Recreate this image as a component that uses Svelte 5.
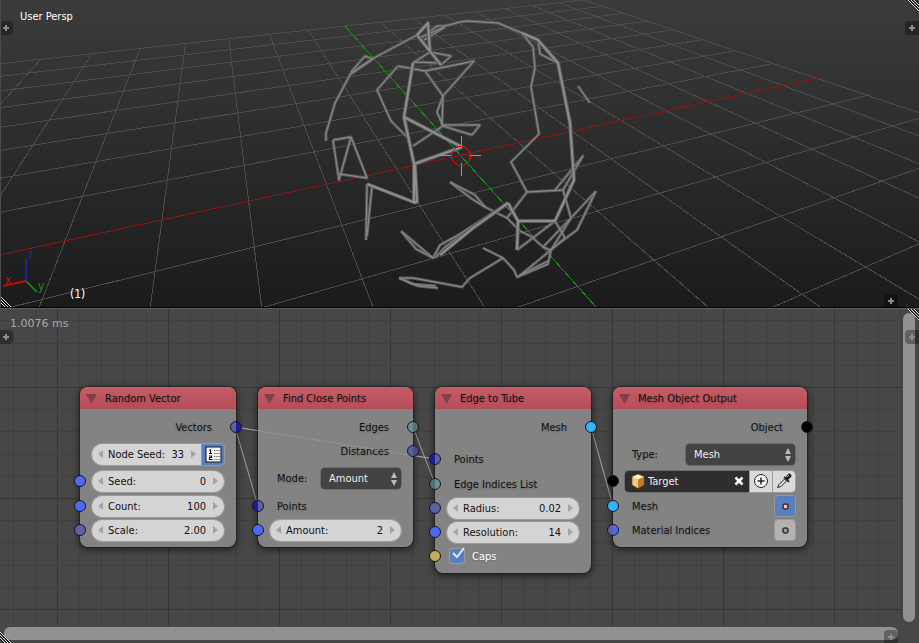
<script>
  // Perspective projection of the ground plane (u along X, v along Y).
  const depth = (u, v) => 1 + 0.04598 * u + 0.1058 * v;
  const project = (u, v) => {
    const w = depth(u, v);
    return [
      ((460.5 + 82.07 * u + 22.05 * v) / w).toFixed(1),
      ((155.3 - 6.03 * u - 13.4 * v) / w).toFixed(1)
    ].join(' ');
  };
  const steps = Array.from({ length: 17 }, (_, i) => i - 8);
  const near = 0.12;
  const floor = [
    ...steps.map((u) => ({
      axis: u === 0 ? 'y' : '',
      d: `M${project(u, Math.max(-8, (near - 1 - 0.04598 * u) / 0.1058))}L${project(u, 8)}`
    })),
    ...steps.map((v) => ({
      axis: v === 0 ? 'x' : '',
      d: `M${project(Math.max(-8, (near - 1 - 0.1058 * v) / 0.04598), v)}L${project(8, v)}`
    }))
  ].sort((a, b) => a.axis.length - b.axis.length);

  const thin = [
    'M326 141L326 133L335 103L351 73L372 59L417 35',
    'M351 72L365 56L373 59L351 74',
    'M428 33L437 26L445 26L460 22L467 21L498 23L522 33',
    'M424 40L445 27M421 37L445 27',
    'M398 66L377 90L391 121L407 137',
    'M398 66L425 71L443 96L437 112L443 126',
    'M425 71L455 65L474 61L443 96L442 125L480 125L472 135L443 126L413 146',
    'M413 63L430 52L451 56L441 65M413 62L441 63',
    'M522 33L533 47L535 68L531 87L539 134L511 162L527 192L563 190',
    'M538 40L540 54L558 63',
    'M578 86L590 103',
    'M333 140L351 137L367 178L339 174M333 140L339 180L351 137',
    'M367 184L366 240M372 186L367 236',
    'M401 231L433 258M401 231L416 249L433 258L440 245L460 234L508 203M435 258L445 247L508 203',
    'M399 278L418 286L438 288M399 278L412 284L436 286M399 278L413 278L462 287L470 278L503 258',
    'M483 248L503 258L514 270L517 277L548 264L551 250',
    'M450 182L475 195L485 207L507 218L520 231L532 237L543 247L550 250',
    'M450 182L472 199L485 207',
    'M507 218L527 192',
    'M563 190L571 218L543 247M555 190L583 156L563 190',
    'M596 191L577 230L550 250M596 191L571 218L551 250',
    'M517 250L555 221L565 238L551 250L518 277M520 275L548 261'
  ];
  const thick = [
    'M417 35L428 23L430 52M417 35L441 65',
    'M413 63L404 117L414 164L414 202L417 202L415 165',
    'M404 117L462 147M414 164L462 147',
    'M367 184L416 203',
    'M522 33L538 40L558 63L570 123L574 180L555 221',
    'M508 203L518 221L555 221M518 222L517 250',
    'M440 255L473 228L508 203'
  ];

  // Editor grid: 111px blocks split in five.
  const gridX = Array.from({ length: 17 * 5 }, (_, i) => ({ p: 57 + Math.round(((i - 5) * 111) / 5), bold: i % 5 === 0 }));
  const gridY = Array.from({ length: 12 * 5 }, (_, i) => ({ p: 78 + Math.round(((i - 5) * 111) / 5), bold: i % 5 === 0 }));

  const wires = ['M235 119L435 151', 'M235 119L258 198', 'M413 119L435 176', 'M591 119L613 198'];

  const blue = '#4f69f5';
  const slate = '#5d60a4';
  const navy = '#1c1c9c';
  const teal = '#6c8f92';

  const nodes = [
    {
      title: 'Random Vector', x: 80, width: 156,
      rows: [
        { kind: 'out', text: 'Vectors', out: [slate, navy] },
        { kind: 'num', text: 'Node Seed:', value: '33', gap: 3, tool: true },
        { kind: 'num', text: 'Seed:', value: '0', gap: 3, in: [blue, blue] },
        { kind: 'num', text: 'Count:', value: '100', gap: 1, in: [blue, blue] },
        { kind: 'num', text: 'Scale:', value: '2.00', in: [slate, slate] }
      ]
    },
    {
      title: 'Find Close Points', x: 258, width: 155,
      rows: [
        { kind: 'out', text: 'Edges', out: [teal, '#507274'] },
        { kind: 'out', text: 'Distances', out: [slate, '#4b4c8c'] },
        { kind: 'select', text: 'Mode:', value: 'Amount', width: 80, gap: 3 },
        { kind: 'in', text: 'Points', gap: 4, in: [navy, slate] },
        { kind: 'num', text: 'Amount:', value: '2', in: [blue, blue] }
      ]
    },
    {
      title: 'Edge to Tube', x: 435, width: 156,
      rows: [
        { kind: 'out', text: 'Mesh', out: ['#34b2fc', '#34b2fc'] },
        { kind: 'in', text: 'Points', gap: 8, in: [navy, slate] },
        { kind: 'in', text: 'Edge Indices List', gap: 1, in: ['#507274', teal] },
        { kind: 'num', text: 'Radius:', value: '0.02', in: [slate, slate] },
        { kind: 'num', text: 'Resolution:', value: '14', in: [blue, blue] },
        { kind: 'check', text: 'Caps', in: ['#c4ac5c', '#c4ac5c'] }
      ]
    },
    {
      title: 'Mesh Object Output', x: 613, width: 194,
      rows: [
        { kind: 'out', text: 'Object', out: ['#000', '#000'] },
        { kind: 'select', text: 'Type:', value: 'Mesh', width: 109, gap: 3 },
        { kind: 'object', value: 'Target', gap: 3, in: ['#000', '#000'] },
        { kind: 'toggle', text: 'Mesh', on: true, gap: 1, in: ['#34b2fc', '#34b2fc'] },
        { kind: 'toggle', text: 'Material Indices', on: false, in: [slate, blue] }
      ]
    }
  ];
</script>

{#snippet plus(place)}
  <button class="plus {place}" aria-label="Show region">
    <svg viewBox="0 0 8 8"><path d="M4 1v6M1 4h6" /></svg>
  </button>
{/snippet}

{#snippet grip(place)}
  <svg class="grip {place}" viewBox="0 0 11 11" aria-hidden="true">
    {#if place === 'tr'}
      <path class="dark" d="M1 0L11 10M4 0L11 7M7 0L11 4" /><path d="M0 0L11 11M3 0L11 8M6 0L11 5" />
    {:else}
      <path class="dark" d="M0 1L10 11M0 4L7 11M0 7L4 11" /><path d="M0 0L11 11M0 3L8 11M0 6L5 11" />
    {/if}
  </svg>
{/snippet}

{#snippet socket(side, colors)}
  <span class="socket {side}" style="--a:{colors[0]};--b:{colors[1]}"></span>
{/snippet}

<main>
  <section class="view" aria-label="3D view">
    <svg class="scene" viewBox="0 0 919 307" preserveAspectRatio="xMidYMid slice" aria-hidden="true">
      <g class="floor">
        {#each floor as line}<path class={line.axis} d={line.d} />{/each}
      </g>
      <g class="tube thin">{#each thin as d}<path {d} />{/each}</g>
      <g class="tube thin lit">{#each thin as d}<path {d} />{/each}</g>
      <g class="tube">{#each thick as d}<path {d} />{/each}</g>
      <g class="tube lit">{#each thick as d}<path {d} />{/each}</g>
      <g class="cursor">
        <path d="M440 155.5h12M469 155.5h12M461.5 136v12M461.5 163v13" />
        <circle cx="461" cy="156" r="9.5" />
      </g>
    </svg>
    <span class="persp">User Persp</span>
    <svg class="axes" viewBox="0 0 50 60">
      <path d="M26 41V19" stroke="#2020a4" stroke-width="2" />
      <path d="M26 41L37 52" stroke="#1c901c" stroke-width="1.5" />
      <path d="M26 41L3 46" stroke="#c40808" stroke-width="2" />
      <text x="28" y="18" fill="#2424a8">z</text>
      <text x="5" y="44" fill="#c01414">x</text>
      <text x="38" y="50" fill="#1c901c">y</text>
    </svg>
    <span class="frame">(1)</span>
    {@render plus('left')}
    {@render plus('right')}
    {@render plus('bottom')}
    {@render grip('tr')}
    {@render grip('bl')}
  </section>

  <section class="editor" aria-label="Node editor">
    <div class="grid">
      <svg aria-hidden="true">
        {#each gridX as l}<path class:bold={l.bold} d="M{l.p} 0v2000" />{/each}
        {#each gridY as l}<path class:bold={l.bold} d="M0 {l.p}h2400" />{/each}
      </svg>
    </div>
    <svg class="wires" aria-hidden="true">{#each wires as d}<path {d} />{/each}</svg>
    <svg class="wires over" aria-hidden="true"><path d={wires[0]} /></svg>

    {#each nodes as node, n}
      <article class="node" style="left:{node.x}px;width:{node.width}px">
        <header>
          <svg viewBox="0 0 12 12" aria-hidden="true"><path d="M0 1h12L6 12z" /></svg>
          <span class="text">{node.title}</span>
        </header>
        <div class="body">
          {#each node.rows as row, r}
            <div class="row {row.kind}" style="margin-top:{row.gap ?? 0}px">
              {#if row.in}{@render socket('l', row.in)}{/if}
              {#if row.out}{@render socket('r', row.out)}{/if}

              {#if row.kind === 'num'}
                <label class="field" class:joined={row.tool}>
                  <svg class="arrow" viewBox="0 0 5 8"><path d="M5 0v8L0 4z" /></svg>
                  <span class="text">{row.text}</span>
                  <input class="text" type="text" value={row.value} />
                  <svg class="arrow" viewBox="0 0 5 8"><path d="M0 0v8l5-4z" /></svg>
                </label>
                {#if row.tool}
                  <button class="list" aria-label="Show as list">
                    <svg viewBox="0 0 17 17">
                      <rect x="1" y="1" width="15" height="15" fill="#f4f4f4" stroke="#161616" />
                      <path d="M4 4h1.5v3.500M4 7.500h3M4 10h2.500v1.500h-2v2h3" fill="none" stroke="#111" stroke-width="1.2" />
                      <path d="M9 4.500h6M9 7.500h6M9 10.500h6M9 13.500h6" stroke="#777" stroke-dasharray="1.500 .7" />
                    </svg>
                  </button>
                {/if}
              {:else if row.kind === 'select'}
                <label class="text" for="s{n}{r}">{row.text}</label>
                <div class="pick" style="width:{row.width}px">
                  <select id="s{n}{r}"><option>{row.value}</option></select>
                  <svg viewBox="0 0 6 14" aria-hidden="true"><path d="M3 0l3 6H0zM0 8h6l-3 6z" /></svg>
                </div>
              {:else if row.kind === 'check'}
                <input type="checkbox" id="c{n}{r}" checked />
                <svg class="tick" viewBox="0 0 16 16" aria-hidden="true"><path d="M3 7l4 4 7-9" /></svg>
                <label class="text" for="c{n}{r}">{row.text}</label>
              {:else if row.kind === 'object'}
                <div class="target">
                  <svg class="cube" viewBox="0 0 14 16" aria-hidden="true">
                    <path d="M7 1l6 2.500v8.500l-6 3.500-6-3.500V3.500z" fill="#e0b050" stroke="#6a4010" />
                    <path d="M7 1.500l5.500 2.200L7 6.500 1.500 3.700z" fill="#fff0d0" />
                    <path d="M1.500 4L7 6.700V15L1.500 11.800z" fill="#f0cc80" />
                    <path d="M12.500 4L7 6.700V15l5.500-3.200z" fill="#bc7c2c" />
                  </svg>
                  <input class="text" type="text" value={row.value} aria-label="Target object" />
                  <button class="clear" aria-label="Clear"><svg viewBox="0 0 10 10"><path d="M1.500 1.500l7 7M8.500 1.500l-7 7" /></svg></button>
                </div>
                <button class="tool" aria-label="Create object">
                  <svg viewBox="0 0 16 16"><circle cx="8" cy="8" r="6.500" fill="#f8f8f8" stroke="#222" /><path d="M8 4.500v7M4.500 8h7" stroke="#222" stroke-width="1.500" /></svg>
                </button>
                <button class="tool last" aria-label="Pick object">
                  <svg viewBox="0 0 16 16">
                    <path d="M1.500 14.500L3 11.500 8.500 6l2 2L5 13.500z" fill="#ddd" stroke="#222" />
                    <path d="M7.500 4.500l5 5 1.200-1.200-1.500-1.500 2.600-2.600a1.800 1.800 0 0 0-3-3L9.700 4.300 8.700 3.300z" fill="#222" />
                    <path d="M11 4l2-2" stroke="#aaa" />
                  </svg>
                </button>
              {:else if row.kind === 'toggle'}
                <span class="text">{row.text}</span>
                <button class="dot" class:on={row.on} aria-pressed={row.on} aria-label="Use {row.text}">
                  <svg viewBox="0 0 7 7"><rect x="1" y="1" width="5" height="5" rx="2" /></svg>
                </button>
              {:else}
                <span class="text">{row.text}</span>
              {/if}
            </div>
          {/each}
        </div>
      </article>
    {/each}

    <span class="time">1.0076 ms</span>
    <div class="bar v"></div>
    <div class="bar h"></div>
    {@render plus('left')}
    {@render plus('right')}
    {@render plus('bottom')}
    {@render grip('tr')}
    {@render grip('bl')}
  </section>
</main>

<style>
  :global(body) { margin: 0; background: #000; }
  main {
    display: grid;
    grid-template-rows: 308fr 335fr;
    height: 100vh;
    overflow: hidden;
    font: 11px/16px "DejaVu Sans Condensed", "DejaVu Sans", sans-serif;
    color: #111;
  }
  svg { display: block; flex: none; }
  button, input, select { font: inherit; color: inherit; margin: 0; padding: 0; border: 0; background: none; }
  section { position: relative; overflow: hidden; min-height: 0; box-sizing: border-box; }
  .text { padding-top: 2px; }

  .view {
    background: linear-gradient(#3b3b3b, #1b1b1b);
    border-bottom: 1px solid #000;
    border-left: 1px solid #4c4c4c;
  }
  .scene { position: absolute; top: 0; left: -1px; width: calc(100% + 1px); height: 100%; }
  .floor path { stroke: #4c4c4c; fill: none; shape-rendering: crispEdges; }
  .floor .x { stroke: #8c1414; }
  .floor .y { stroke: #149014; }
  .tube { fill: none; stroke: #5c5c5c; stroke-width: 4; stroke-linejoin: round; }
  .tube.lit { stroke: #8e8e8e; stroke-width: 2; }
  .tube.thin { stroke: #5c5c5c; stroke-width: 3; }
  .tube.thin.lit { stroke: #8c8c8c; stroke-width: 1; }
  .cursor { fill: none; stroke: #999; }
  .cursor circle { stroke: #f00; shape-rendering: crispEdges; }
  .persp { position: absolute; left: 19px; top: 9px; color: #fff; }
  .frame { position: absolute; left: 69px; bottom: 5px; color: #fff; font-size: 12px; }
  .axes { position: absolute; left: -1px; bottom: 7px; width: 50px; height: 60px; }
  .axes text { font-size: 12px; }

  .plus {
    position: absolute;
    z-index: 3;
    display: grid;
    place-items: center;
    width: 14px;
    height: 14px;
    background: rgba(0, 0, 0, .33);
  }
  .plus svg { width: 8px; height: 8px; stroke: #8e8e8e; stroke-width: 2; }
  .plus.left { left: -2px; top: 21px; border-radius: 0 4px 4px 0; }
  .plus.right { right: 0; top: 21px; border-radius: 4px 0 0 4px; }
  .plus.bottom { right: 21px; bottom: 0; border-radius: 4px 4px 0 0; height: 13px; }

  .grip { position: absolute; z-index: 3; width: 11px; height: 11px; stroke: #ddd; }
  .grip .dark { stroke: #000; }
  .grip.tr { top: 0; right: 0; }
  .grip.bl { bottom: 0; left: -1px; }

  .editor { background: #474747; border-top: 1px solid #606060; }
  .grid { position: absolute; inset: 0 17px 17px 0; overflow: hidden; }
  .grid svg { width: 100%; height: 100%; shape-rendering: crispEdges; }
  .grid path { stroke: #404040; }
  .grid .bold { stroke: #363636; }
  .wires { position: absolute; left: 0; top: -1px; width: 100%; height: 100%; fill: none; stroke: #a2a2a2; }
  .wires.over { z-index: 1; opacity: .5; pointer-events: none; }
  .time { position: absolute; left: 10px; top: 7px; color: #a8a8a8; font-family: "DejaVu Sans", sans-serif; }
  .editor .plus.left { left: -1px; }
  .editor .grip.bl { left: 0; }

  .bar { position: absolute; z-index: 2; background: #919191; border-radius: 6px; }
  .bar.v { right: 4px; top: 4px; bottom: 21px; width: 12px; }
  .bar.h { left: 4px; right: 21px; bottom: 3px; height: 13px; }

  .node {
    position: absolute;
    top: 78px;
    border-radius: 8px;
    background: #838383;
    box-shadow: 0 0 0 1px rgba(20, 20, 20, .45), 0 2px 7px 1px rgba(0, 0, 0, .55);
  }
  header {
    display: flex;
    align-items: center;
    gap: 8px;
    height: 22px;
    padding: 0 6px;
    border-radius: 8px 8px 0 0;
    background: linear-gradient(#c65c66, #b44e59);
  }
  header, .body { text-shadow: 0 1px 2px rgba(0, 0, 0, .2); }
  header svg { width: 11px; height: 11px; fill: #843e46; }
  .body { padding: 6px 12px 5px; }
  .row { position: relative; display: flex; align-items: center; height: 24px; }
  .row.out { justify-content: flex-end; padding-right: 12px; }
  .row.in, .row.toggle, .row.select { padding-left: 7px; }
  .row.toggle, .row.select { justify-content: space-between; }

  .socket {
    position: absolute;
    z-index: 2;
    top: 6px;
    box-sizing: border-box;
    width: 12px;
    height: 12px;
    border: 1px solid #161622;
    border-radius: 50%;
    background: linear-gradient(90deg, var(--a) 50%, var(--b) 50%);
  }
  .socket.l { left: -18px; }
  .socket.r { right: -18px; }

  .field {
    flex: 1;
    min-width: 0;
    display: flex;
    align-items: center;
    height: 21px;
    padding: 0 6px;
    box-sizing: border-box;
    border-radius: 11px;
    background: #d4d4d4;
    box-shadow: 0 0 0 1px #9b9b9b;
    text-shadow: none;
  }
  .field.joined { border-radius: 11px 0 0 11px; }
  .field span { margin-left: 5px; flex: none; }
  .field input { flex: 1; min-width: 0; width: 0; text-align: right; margin-right: 7px; }
  .arrow { width: 5px; height: 8px; fill: #a4a4a4; }
  .list {
    display: grid;
    place-items: center;
    width: 22px;
    height: 21px;
    background: #5680c2;
    border-radius: 0 4px 4px 0;
    box-shadow: 0 0 0 1px #9b9b9b;
  }
  .list svg { width: 17px; height: 17px; }

  .pick { position: relative; }
  .pick select {
    appearance: none;
    display: block;
    width: 100%;
    height: 21px;
    padding: 2px 8px 0;
    border-radius: 4px;
    background: #434343;
    box-shadow: 0 0 0 1px #6a6a6a;
    color: #eee;
  }
  .pick svg { position: absolute; right: 4px; top: 4px; width: 6px; height: 14px; fill: #bcbcbc; }

  .check input { appearance: none; width: 14px; height: 14px; margin-left: 3px; border-radius: 3px; background: #5680c2; box-shadow: 0 0 0 1px #9a9a9a; }
  .check label { margin-left: 8px; color: #fff; }
  .tick { position: absolute; left: 3px; top: 2px; width: 16px; height: 16px; fill: none; stroke: #e6e6e6; stroke-width: 2; pointer-events: none; }

  .target {
    flex: 1;
    min-width: 0;
    display: flex;
    align-items: center;
    height: 21px;
    padding: 0 5px 0 6px;
    box-sizing: border-box;
    border-radius: 4px 0 0 4px;
    background: #2e2e2e;
    box-shadow: 0 0 0 1px #6c6c6c;
    color: #eee;
  }
  .target input { flex: 1; min-width: 0; margin-left: 3px; }
  .cube { width: 14px; height: 16px; }
  .clear svg { width: 10px; height: 10px; stroke: #fff; stroke-width: 2.5; }
  .tool { display: grid; place-items: center; width: 22px; height: 21px; background: #dadada; box-shadow: 0 0 0 1px #9b9b9b; margin-left: 1px; }
  .tool.last { border-radius: 0 4px 4px 0; }
  .tool svg { width: 16px; height: 16px; }

  .dot { display: grid; place-items: center; width: 20px; height: 20px; border-radius: 3px; background: #b2b2b2; box-shadow: 0 0 0 1px #989898; }
  .dot svg { width: 7px; height: 7px; fill: #999; stroke: #333; stroke-width: 1.5; }
  .dot.on { background: #5680c2; }
  .dot.on svg { fill: #f6d08c; stroke: #4a2434; }
</style>
